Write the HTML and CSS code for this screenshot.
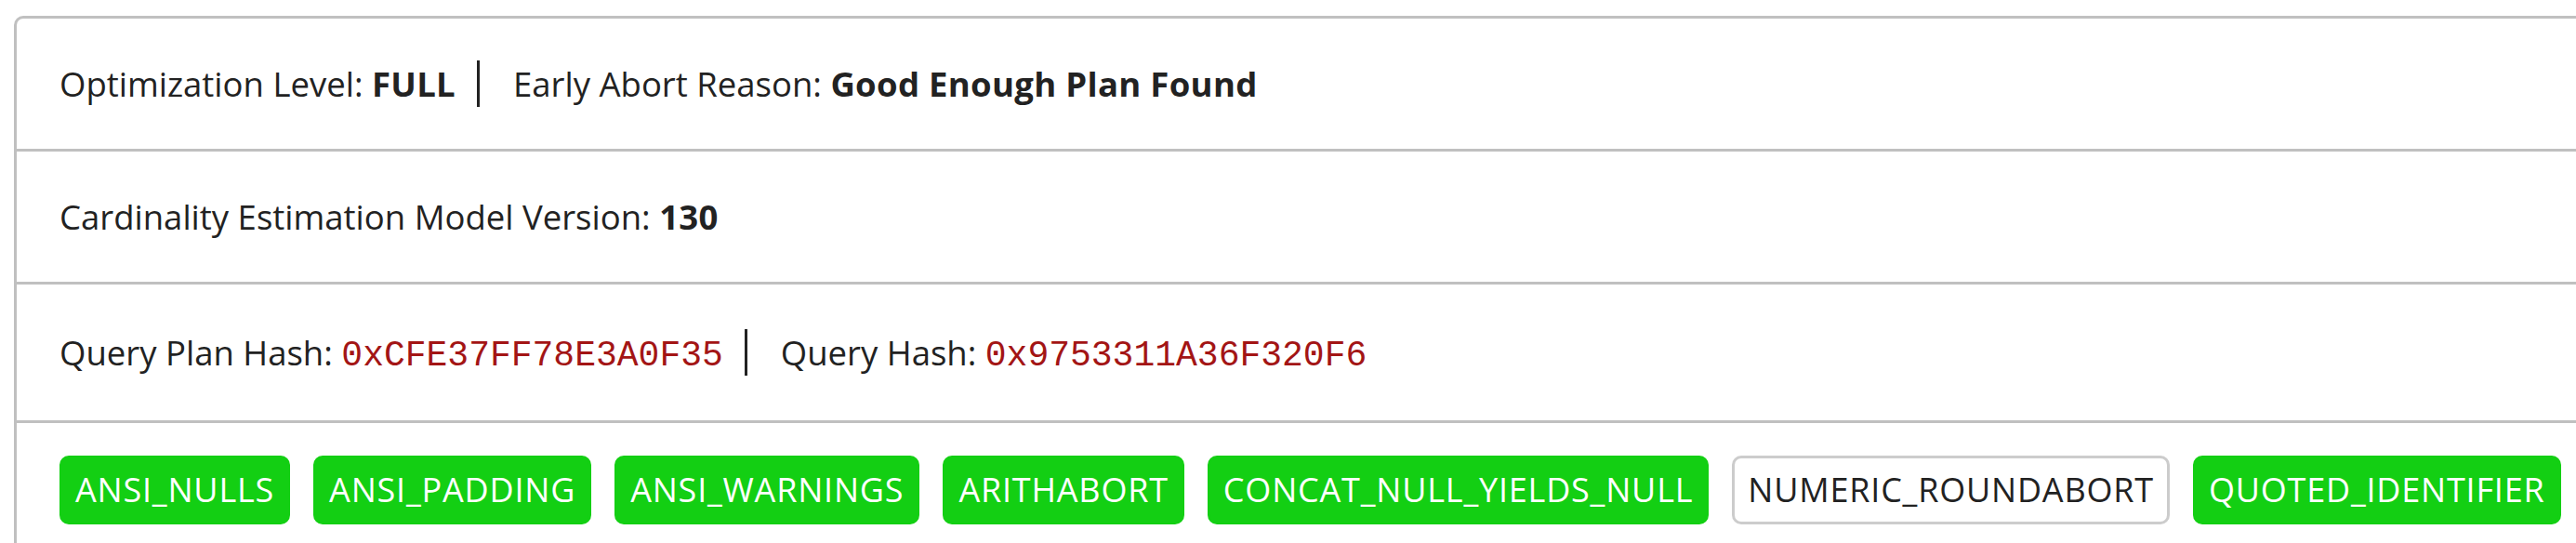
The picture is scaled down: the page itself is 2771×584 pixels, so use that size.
FILE: index.html
```html
<!DOCTYPE html>
<html>
<head>
<meta charset="utf-8">
<link rel="stylesheet" href="styles.css">
</head>
<body>
<div class="card">
  <div class="row">
    <span class="item">Optimization Level: <b>FULL</b></span><span class="sep"></span><span class="item">Early Abort Reason: <b>Good Enough Plan Found</b></span>
  </div>
  <div class="row">
    <span class="item">Cardinality Estimation Model Version: <b>130</b></span>
  </div>
  <div class="row">
    <span class="item">Query Plan Hash: <code class="hash">0xCFE37FF78E3A0F35</code></span><span class="sep"></span><span class="item">Query Hash: <code class="hash">0x9753311A36F320F6</code></span>
  </div>
  <div class="row badges">
    <span class="badge on">ANSI_NULLS</span>
    <span class="badge on">ANSI_PADDING</span>
    <span class="badge on">ANSI_WARNINGS</span>
    <span class="badge on">ARITHABORT</span>
    <span class="badge on">CONCAT_NULL_YIELDS_NULL</span>
    <span class="badge off">NUMERIC_ROUNDABORT</span>
    <span class="badge on">QUOTED_IDENTIFIER</span>
  </div>
</div>
</body>
</html>
```
FILE: styles.css
```css
html, body {
  margin: 0;
  padding: 0;
  background: #ffffff;
  overflow: hidden;
}
body {
  padding: 17px 0 0 15px;
  font-family: "Open Sans", "Noto Sans", sans-serif;
  font-size: 36.5px;
  color: #222222;
}
.card {
  width: 2820px;
  border: 3px solid #c0c0c0;
  border-radius: 10px;
  box-sizing: border-box;
}
.row {
  display: flex;
  align-items: center;
  height: 140px;
  padding: 0 46px;
  border-bottom: 3px solid #c0c0c0;
}
.row:nth-child(3) {
  height: 146px;
}
.row.badges {
  border-bottom: none;
  height: auto;
  padding-top: 35px;
  padding-bottom: 35px;
  gap: 25px;
  align-items: flex-start;
}
.item {
  white-space: pre;
}
b {
  font-weight: 700;
  letter-spacing: 0.3px;
}
.sep {
  display: inline-block;
  width: 3px;
  height: 50px;
  background: #222222;
  margin: 0 36px 0 23px;
}
.hash {
  font-family: "Liberation Mono", "Courier New", monospace;
  font-size: 38px;
  color: #a31515;
}
.badge {
  display: inline-block;
  padding: 10px 14px;
  border: 3px solid transparent;
  border-radius: 10px;
  font-size: 36px;
  line-height: 48px;
  letter-spacing: 0.8px;
}
.badge.on {
  background: #13cf13;
  border-color: #13cf13;
  color: #ffffff;
}
.badge.off {
  background: #ffffff;
  border-color: #cccccc;
  color: #222222;
}
```
